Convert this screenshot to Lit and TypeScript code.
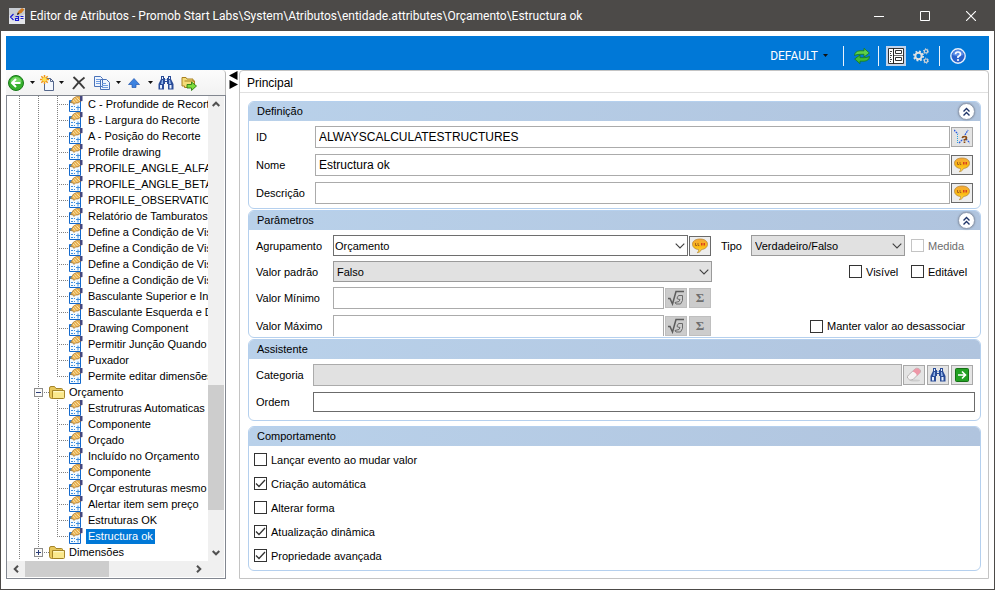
import { LitElement, html, css, nothing } from "lit";
import { customElement, state } from "lit/decorators.js";
import { classMap } from "lit/directives/class-map.js";

const binoculars = html`<svg width="16" height="16" viewBox="0 0 16 16">
  <path d="M3 1h3v2h1v3h2V3h1V1h3v3l2.500 5v5.500h-5.500V9H9V7H7v2H6v5.500H.5V9L3 4z" fill="#2a4c98"/>
  <path d="M4 2h1v2H4zM11 2h1v2h-1zM2 10h2v3.500H2zM11.500 10h2v3.500h-2z" fill="#eaf2ff"/>
  <path d="M4 5h1v4H3zM11 5h1l1 4h-2zM7 4h2v1H7z" fill="#8fb2e8"/>
</svg>`;

const balloon = html`<svg width="16" height="16" viewBox="0 0 16 16">
  <defs><linearGradient id="b" x2="0" y2="1"><stop offset="0" stop-color="#f4a83a"/><stop offset=".55" stop-color="#fbb910"/><stop offset="1" stop-color="#ffe04a"/></linearGradient></defs>
  <path d="M8 1c4.600 0 7.500 2.100 7.500 5.200 0 2.900-2.300 4.900-6 5.300C8.700 13.500 7 14.600 5.300 14.700c1-.9 1.400-1.900 1.200-3.200C2.900 11.100.5 9.100.5 6.200.5 3.100 3.400 1 8 1z" fill="url(#b)" stroke="#b98a3c" stroke-width=".8"/>
  <path d="M3.500 5v2.500H5M6 5v2.500h1.300" fill="none" stroke="#a8641c"/>
  <path d="M9 5h1.500v2.500H9zM11.500 5H13v2.500h-1.500z" fill="#d8401c"/>
</svg>`;

const attributeIcon = html`<svg class="leaf-ico" width="16" height="16" viewBox="0 0 16 16">
  <path d="M.5 4.500h11v11H.5z" fill="#f4faff" stroke="#1268cc"/>
  <path d="M1 4h6v3H1z" fill="#2f86e0"/>
  <path d="M2 10h2v1H2zM2 13h2v1H2zM5 10h1v1H5zM5 13h1v1H5zM7 11h4v1H7zM8.500 9.500h1v5h-1z" fill="#3f8fe0"/>
  <path d="M1.500 6.500L4.500 2 7.500.500H12v4.500L9 7H6.500L5 8.500 4 7z" fill="#e8b050" stroke="#9a6a24" stroke-width=".6"/>
  <path d="M4 4l2 2.500M5.500 2.500L8.500 6M7.500 1.500L11 5" stroke="#fbe6b4" stroke-width=".9"/>
  <path d="M11 0h2.500v5L11 5.500z" fill="#44477e"/>
</svg>`;

const folderIcon = html`<svg class="ico" width="16" height="16" viewBox="0 0 16 16">
  <path d="M.5 4Q.5 2.500 2 2.500h3.500L7 4.500h5.500q1 0 1 1V14.500H2.500Q.5 14 .5 12.500z" fill="#e8c85c" stroke="#9c7a1c" stroke-width=".9"/>
  <path d="M3.500 6.500h12v7q0 1-1 1H4.500q-1 0-1-1z" fill="#fae88c" stroke="#9c7a1c" stroke-width=".9"/>
  <path d="M4.500 7.700h10" stroke="#fffbd6"/>
</svg>`;

const chevron = html`<svg class="chev" width="10" height="6" viewBox="0 0 10 6"><path d="M.7.7L5 5 9.300.7" fill="none" stroke="#404040" stroke-width="1.100"/></svg>`;

const root = html`<svg width="18" height="16" viewBox="0 0 18 16"><path d="M1 8.500h2l2.500 5.500L9 1.500h8" fill="none" stroke="#5c5c5c" stroke-width="1.500"/><path d="M10 8l1.500-2.500h4v5l-2 3.500H9l-1-1.500 4-1 1-2-2.500-.5z" fill="none" stroke="#6a6a6a"/></svg>`;

const DIMENSIONS = [
  "C - Profundide de Recorte", "B - Largura do Recorte", "A - Posição do Recorte", "Profile drawing",
  "PROFILE_ANGLE_ALFA", "PROFILE_ANGLE_BETA", "PROFILE_OBSERVATION", "Relatório de Tamburatos",
  "Define a Condição de Visibilidade", "Define a Condição de Visibilidade", "Define a Condição de Visibilidade",
  "Define a Condição de Visibilidade", "Basculante Superior e Inferior", "Basculante Esquerda e Direita",
  "Drawing Component", "Permitir Junção Quando", "Puxador", "Permite editar dimensões",
];
const BUDGET = [
  "Estrutruras Automaticas", "Componente", "Orçado", "Incluído no Orçamento", "Componente",
  "Orçar estruturas mesmo", "Alertar item sem preço", "Estruturas OK", "Estructura ok",
];

const base = css`
  :host, * { box-sizing: border-box; }
  button { font: inherit; color: inherit; border: 0; background: none; padding: 0; margin: 0;
    display: inline-flex; align-items: center; justify-content: center; flex: none; }
  svg { display: block; flex: none; }
`;

@customElement("attribute-tree")
class AttributeTree extends LitElement {
  @state() selected = 8;

  static styles = [base, css`
    :host { display: grid; grid-template-columns: minmax(0, 1fr) 16px; grid-template-rows: minmax(0, 1fr) 16px;
      border: 1px solid #828790; background: #fff; min-height: 0; padding: 0 1px 1px 0; }
    .rows { list-style: none; margin: 0; padding: 0; overflow: hidden; }
    .row { display: flex; height: 16px; align-items: center; padding-left: 12px; white-space: nowrap; }
    .guide { height: 16px; flex: none; background: repeating-linear-gradient(#808080 0 1px, transparent 1px 2px) left top / 1px 100% no-repeat; }
    .wide { width: 19px; }
    .mid { width: 15px; }
    .branch { width: 12px; background:
      repeating-linear-gradient(#808080 0 1px, transparent 1px 2px) left top / 1px 100% no-repeat,
      repeating-linear-gradient(90deg, #808080 0 1px, transparent 1px 2px) left 8px / 100% 1px no-repeat; }
    .branch.last { background-size: 1px 9px, 100% 1px; }
    .knot { width: 15px; display: flex; align-items: center; background:
      repeating-linear-gradient(#808080 0 1px, transparent 1px 2px) 4px top / 1px 100% no-repeat,
      repeating-linear-gradient(90deg, #808080 0 1px, transparent 1px 2px) left 8px / 100% 1px no-repeat; }
    .toggle { width: 9px; height: 9px; border: 1px solid #8c8c8c; background: #fafafa; }
    .ico { margin-right: 2px; }
    .leaf-ico { margin-right: 1px; }
    .label { padding: 0 2px; line-height: 15px; }
    .picked { background: #0078d7; color: #fff; }
    .vbar, .hbar { background: #f0f0f0; display: flex; }
    .vbar { flex-direction: column; }
    .bar-btn { width: 16px; height: 16px; }
    .hbar .bar-btn { width: 18px; }
    .track { flex: 1; display: flex; }
    .vbar .track { flex-direction: column; }
    .vbar .thumb { margin-top: auto; height: 29%; background: #cdcdcd; }
    .vbar .after { height: 8%; }
    .hbar .thumb { width: 51%; background: #cdcdcd; }
    .corner { background: #f0f0f0; }
  `];

  private leaf(text: string, index: number, last: boolean) {
    const picked = index === this.selected;
    return html`<li class="row"><span class="guide wide"></span><span class="guide wide"></span>
      <span class=${classMap({ guide: true, branch: true, last })}></span>${attributeIcon}
      <span class=${classMap({ label: true, picked })} @click=${() => { if (index >= 0) this.selected = index; }}>${text}</span></li>`;
  }

  private folder(text: string, open: boolean) {
    return html`<li class="row"><span class="guide mid"></span><span class="guide knot">
      <button class="toggle" aria-label=${open ? "Recolher" : "Expandir"}><svg width="7" height="7" viewBox="0 0 7 7">
        <path d=${open ? "M1 3.500h5" : "M1 3.500h5M3.500 1v5"} stroke="#2c3e78"/></svg></button></span>${folderIcon}
      <span class="label">${text}</span></li>`;
  }

  private arrow(d: string, name: string) {
    return html`<button class="bar-btn" aria-label=${name}><svg width="8" height="8" viewBox="0 0 8 8"><path d=${d} fill="none" stroke="#505050" stroke-width="2"/></svg></button>`;
  }

  render() {
    return html`
      <ul class="rows">
        ${DIMENSIONS.map((t, i) => this.leaf(t, -1, i === DIMENSIONS.length - 1))}
        ${this.folder("Orçamento", true)}
        ${BUDGET.map((t, i) => this.leaf(t, i, i === BUDGET.length - 1))}
        ${this.folder("Dimensões", false)}
      </ul>
      <div class="vbar">${this.arrow("M.7 6L4 2.700 7.300 6", "Acima")}<div class="track"><div class="thumb"></div><div class="after"></div></div>${this.arrow("M.7 2L4 5.300 7.300 2", "Abaixo")}</div>
      <div class="hbar">${this.arrow("M6 .7L2.700 4 6 7.300", "Esquerda")}<div class="track"><div class="thumb"></div></div>${this.arrow("M2 .7L5.300 4 2 7.300", "Direita")}</div>
      <div class="corner"></div>`;
  }
}

@customElement("group-box")
class GroupBox extends LitElement {
  static properties = { heading: {}, collapsible: { type: Boolean } };
  declare heading: string;
  declare collapsible: boolean;

  static styles = [base, css`
    :host { display: block; border: 1px solid #b5d0ee; border-radius: 6px; overflow: hidden; background: #fff; }
    .head { height: 19px; display: flex; align-items: center; justify-content: space-between;
      padding: 0 5px 0 8px; background: linear-gradient(90deg, #b9d1ea, #b0c4de); }
    h2 { margin: 0; padding-bottom: 2px; font: inherit; }
    .fold { width: 17px; height: 17px; border-radius: 50%; background: #fff; border: 1px solid #8e9bb0;
      box-shadow: 0 0 2px #7b8798; }
  `];

  render() {
    return html`<div class="head"><h2>${this.heading}</h2>
      ${this.collapsible ? html`<button class="fold" aria-label="Recolher ${this.heading}"><svg width="9" height="10" viewBox="0 0 9 10">
        <path d="M1.500 4.500l3-3 3 3M1.500 8.500l3-3 3 3" fill="none" stroke="#1f3468" stroke-width="1.400"/></svg></button>` : nothing}</div>
      <slot></slot>`;
  }
}

@customElement("app-root")
class AppRoot extends LitElement {
  static styles = [base, css`
    :host { display: block; height: 100vh; padding: 0 13px 17px 0; background: #fff; color: #000;
      font: 11px/14px "Liberation Sans", Arial, sans-serif; }
    .window { height: 100%; display: flex; flex-direction: column; border: 1px solid #4c4a48; border-top: 0; }
    .title { height: 31px; flex: none; background: #4c4a48; color: #fff; display: flex; align-items: center; padding-left: 8px;
      font: 12px/16px Roboto, sans-serif; }
    .title h1 { font: inherit; margin: 0 auto 0 5px; white-space: nowrap; }
    .winbtn { width: 46px; height: 31px; }
    .client { flex: 1; min-height: 0; padding: 5px 5px 10px; display: flex; flex-direction: column; }
    .ribbon { height: 34px; flex: none; background: #0078d7; color: #fff; display: flex; align-items: center;
      justify-content: flex-end; padding: 5px 21px 0 0; }
    .profile { font: 12px/16px Roboto, sans-serif; gap: 5px; margin-right: 7px; }
    .tool { width: 20px; height: 20px; }
    .on { background: #c2d3ea; margin-right: 5px; }
    .sep { width: 1px; height: 20px; background: #e8f2fc; margin: 0 8px; }
    .tight { margin: 0 7px 0 6px; }
    .main { flex: 1; min-height: 0; display: grid; grid-template-columns: 220px 13px minmax(0, 1fr); }
    .side { display: flex; flex-direction: column; min-height: 0; }
    attribute-tree { flex: 1; }
    .bar { height: 25px; flex: none; display: flex; align-items: center; padding-left: 1px;
      background: linear-gradient(#fcfcfc, #f2f2f2); border-right: 1px solid #b8b8b8; border-radius: 0 4px 0 0; }
    .item { width: 18px; height: 20px; }
    .caret { width: 14px; height: 20px; }
    .narrow { width: 8px; }
    .gap { margin-left: 5px; }
    .split { padding: 1px 0 0 2px; display: flex; flex-direction: column; }
    .panel { border: 1px solid #c4c4c4; border-radius: 4px 4px 0 0; min-width: 0; }
    .tab { height: 22px; border-bottom: 1px solid #e0e0e0; padding: 5px 7px; font-size: 12px; margin: 0; font-weight: normal; }
    .groups { padding: 8px 7px 0 8px; display: flex; flex-direction: column; gap: 1px; }
    .apart { margin-top: 4px; }
    .body { padding: 5px 7px 4px; display: grid; gap: 6px; }
    .body.roomy { padding-bottom: 8px; }
    .line { display: grid; align-items: center; column-gap: 1px; }
    .def { grid-template-columns: 58px minmax(0, 1fr) 22px; }
    .asst { grid-template-columns: 56px minmax(0, 1fr) auto; }
    .order { grid-template-columns: 56px minmax(0, 1fr); margin-right: -2px; }
    .params { height: 106px; margin-bottom: 1px; overflow: hidden; align-content: start; padding-bottom: 0; row-gap: 5px; }
    .par { grid-template-columns: 76px minmax(0, 1fr) 260px; }
    .gapped { margin-bottom: 1px; }
    .left { display: flex; align-items: center; gap: 1px; padding-right: 1px; }
    .full { padding-right: 0; }
    .right { display: flex; align-items: center; justify-content: flex-end; }
    .pair { display: flex; gap: 2px; }
    input[type="text"] { width: 100%; min-width: 0; height: 22px; border: 1px solid #ababab; padding: 0 3px; margin: 0; background: #fff;
      font: 12px/16px "Liberation Sans", Arial, sans-serif; border-radius: 0; outline: 0; color: #000; }
    input.off { background: #e1e1e1; border-color: #ababab; }
    input.dark { height: 20px; border-color: #6b6b6b; }
    .combo { position: relative; display: block; flex: 1; min-width: 0; }
    .combo.type { flex: 0 0 154px; margin-right: 6px; }
    .chev { position: absolute; right: 3px; top: 8px; pointer-events: none; }
    select { appearance: none; width: 100%; height: 21px; border: 1px solid #9a9a9a; border-radius: 0; background: #e1e1e1;
      padding: 0 16px 0 3px; margin: 0; font: inherit; color: #000; display: block; outline: 0; }
    select.edit { background: #fff; border-color: #6e6e6e; padding-left: 1px; }
    .sq { width: 22px; height: 20px; border: 1px solid #a8a8a8; background: #e4e4e4; }
    .talk { border-color: #6a6a6a; background: #ededed; }
    .dim { background: #cccccc; border-color: #bfbfbf; color: #6e6e6e; }
    .sum { font: bold 13px/16px "Liberation Serif", serif; }
    .type-label { width: 30px; }
    .check { display: flex; align-items: center; gap: 4px; white-space: nowrap; }
    .col { width: 62px; }
    .keep { width: 163px; }
    .muted { color: #6d6d6d; }
    input[type="checkbox"] { appearance: none; width: 13px; height: 13px; margin: 0; border: 1px solid #333; background: #fff; flex: none; }
    input[type="checkbox"]:checked { background: #fff url("data:image/svg+xml,%3Csvg xmlns='http://www.w3.org/2000/svg' viewBox='0 0 11 11'%3E%3Cpath d='M1 5.500l3 3 6-6.500' fill='none' stroke='%23333' stroke-width='1.300'/%3E%3C/svg%3E") center / 11px 11px no-repeat; }
    input[type="checkbox"]:disabled { border-color: #c4c4c4; }
    .behave { padding: 7px 5px 8px; gap: 11px; }
    .behave .check { height: 13px; }
  `];

  private caret(cls = "") {
    return html`<button class="caret ${cls}" aria-label="Opções"><svg width="5" height="3" viewBox="0 0 5 3"><path d="M0 0h5L2.500 3z" fill="#111"/></svg></button>`;
  }

  private check(id: string, text: string, checked = false, cls = "", disabled = false) {
    return html`<label class="check ${cls}" for=${id}><input type="checkbox" id=${id} ?checked=${checked} ?disabled=${disabled}>${text}</label>`;
  }

  private limit(id: string, text: string) {
    return html`<label for=${id}>${text}</label><div class="left"><input type="text" id=${id}>
      <span class="pair"><button class="sq dim" disabled aria-label="Fórmula">${root}</button><button class="sq dim sum" disabled>Σ</button></span></div>`;
  }

  render() {
    return html`<div class="window">
      <header class="title">
        <svg width="16" height="16" viewBox="0 0 16 16"><path d="M0 0h16v16H0z" fill="#e4e6ea"/><path d="M0 0h16v6L6 11 0 7z" fill="#c8ccd2"/>
          <path d="M4.500 6L1.500 9l3 3M6.500 8.500h3v4h-3v-2h3M11.500 8.500h3M11.500 10.500h3" fill="none" stroke="#1818d0" stroke-width="1.200"/>
          <path d="M8 6.500L9.500 3 13 0l2.500 1.500-3 3.500z" fill="#d07a20"/><path d="M8 7l.8-2.500L10.500 6z" fill="#111"/></svg>
        <h1>Editor de Atributos - Promob Start Labs\\System\\Atributos\\entidade.attributes\\Orçamento\\Estructura ok</h1>
        <button class="winbtn" aria-label="Minimizar"><svg width="10" height="10" viewBox="0 0 10 10"><path d="M0 5.500h10" stroke="#fff"/></svg></button>
        <button class="winbtn" aria-label="Maximizar"><svg width="10" height="10" viewBox="0 0 10 10"><path d="M.5.5h9v9h-9z" fill="none" stroke="#fff"/></svg></button>
        <button class="winbtn" aria-label="Fechar"><svg width="10" height="10" viewBox="0 0 10 10"><path d="M0 0l10 10M10 0L0 10" stroke="#fff" stroke-width="1.100"/></svg></button>
      </header>
      <div class="client">
        <nav class="ribbon">
          <button class="profile">DEFAULT<svg width="5" height="3" viewBox="0 0 5 3"><path d="M0 0h5L2.500 3z" fill="#111"/></svg></button>
          <span class="sep"></span>
          <button class="tool" aria-label="Atualizar"><svg width="16" height="16" viewBox="0 0 16 16">
            <path d="M.5 7.500Q1 3 6 2.800h4V.3L15.300 5 10 9V6.300H6Q3 6.300.5 7.500z" fill="#5ed048" stroke="#167a1a" stroke-width=".8"/>
            <path d="M15.500 8.500Q15 13 10 13.200H6v2.500L.7 11 6 7v2.700h4q3 0 5.500-1.200z" fill="#42bc34" stroke="#167a1a" stroke-width=".8"/>
            </svg></button>
          <span class="sep tight"></span>
          <button class="tool on" aria-label="Propriedades"><svg width="16" height="16" viewBox="0 0 16 16">
            <path d="M.5.5h15v15H.5z" fill="#fff" stroke="#333"/><path d="M5.500 0v16" stroke="#222"/>
            <path d="M2 3.500h2M2 5.500h1M2 7.500h2M2 9.500h1M2 11.500h2M2 13.500h1" stroke="#444"/><path d="M7.500 2.500h6v3h-6zM7.500 9.500h6v3h-6z" fill="#fff" stroke="#333"/><path d="M6 7.500h9" fill="none" stroke="#777"/></svg></button>
          <button class="tool" aria-label="Configurações"><svg width="16" height="16" viewBox="0 0 16 16" fill="none">
            <circle cx="5.500" cy="8" r="3.200" stroke="#e2e2e2" stroke-width="2"/><circle cx="5.500" cy="8" r="4.600" stroke="#e2e2e2" stroke-width="1.800" stroke-dasharray="1.800 1.810"/>
            <circle cx="13" cy="3.300" r="1.700" stroke="#d6d6d6" stroke-width="1.200"/><circle cx="13" cy="3.300" r="2.600" stroke="#d6d6d6" stroke-dasharray="1.200 1.520"/>
            <circle cx="13" cy="12.700" r="1.700" stroke="#d6d6d6" stroke-width="1.200"/><circle cx="13" cy="12.700" r="2.600" stroke="#d6d6d6" stroke-dasharray="1.200 1.520"/></svg></button>
          <span class="sep"></span>
          <button class="tool" aria-label="Ajuda"><svg width="16" height="16" viewBox="0 0 16 16"><circle cx="8" cy="8" r="7.200" fill="#2a62cc" stroke="#e8f0fc" stroke-width="1.400"/>
            <path d="M2.500 7a5.500 5 0 0 1 11 0q-5 2-11 0z" fill="#5a8ce8"/><path d="M5.500 6.200Q5.600 4 8 4t2.500 2.200Q10.500 7.500 8 8.800V10" fill="none" stroke="#fff" stroke-width="1.700"/><circle cx="8" cy="12" r="1.100" fill="#fff"/></svg></button>
        </nav>
        <div class="main">
          <aside class="side">
            <div class="bar">
              <button class="item" aria-label="Voltar"><svg width="16" height="16" viewBox="0 0 16 16"><circle cx="8" cy="8" r="7.500" fill="#35b02c" stroke="#187818"/>
                <path d="M2.500 7a5.500 5 0 0 1 11 0q-5 2-11 0z" fill="#74d864"/><path d="M12.500 8H4.500M8 4L4 8l4 4" fill="none" stroke="#fff" stroke-width="2"/></svg></button>
              ${this.caret()}
              <button class="item" aria-label="Novo"><svg width="16" height="16" viewBox="0 0 16 16"><path d="M4.500 3.500h6l3 3v9h-9z" fill="#f4f8ff" stroke="#55678c"/><path d="M10.500 3.500v3h3" fill="none" stroke="#55678c"/>
                <path d="M4.500 0v9M0 4.500h9M1.300 1.300l6.400 6.400M7.700 1.300L1.300 7.700" stroke="#f0981c" stroke-width="1.500"/><circle cx="4.500" cy="4.500" r="2.200" fill="#ffe050"/></svg></button>
              ${this.caret("narrow")}
              <button class="item gap" aria-label="Excluir"><svg width="14" height="14" viewBox="0 0 14 14"><path d="M1.500 1Q6 5 12.500 12.500M12.500 1.500Q6 6 1 13" fill="none" stroke="#3c3c3c" stroke-width="1.900"/></svg></button>
              <button class="item gap" aria-label="Copiar"><svg width="16" height="16" viewBox="0 0 16 16"><g fill="#f0f6ff" stroke="#4a72b8"><path d="M.5 1.500h6l2 2v8h-8zM6.500 4.500h6l3 3v7h-9z"/></g><path d="M2 4.500h4M2 6.500h4M2 8.500h4M8 8.500h4M8 10.500h6M8 12.500h6" stroke="#6f9ce0"/></svg></button>
              ${this.caret()}
              <button class="item" aria-label="Mover"><svg width="12" height="10" viewBox="0 0 12 10"><path d="M6 .5L11.500 6.500H8v3H4v-3H.5z" fill="#3c82e0" stroke="#2258b0" stroke-width=".7"/></svg></button>
              ${this.caret()}
              <button class="item" aria-label="Localizar">${binoculars}</button>
              <button class="item gap" aria-label="Ir para pasta"><svg width="16" height="16" viewBox="0 0 16 16"><path d="M1 2.500h4l1 1.500h6v2h1.500v6.500h-10V11H1z" fill="#f4dc78" stroke="#a88020"/><path d="M3.500 6h10" stroke="#a88020"/>
                <path d="M6 9.500h4.500V7L15.500 11l-5 4.500V13H6z" fill="#7cdc3c" stroke="#2c7c14" stroke-width=".9"/></svg></button>
            </div>
            <attribute-tree></attribute-tree>
          </aside>
          <div class="split">
            <button aria-label="Recolher painel"><svg width="9" height="9" viewBox="0 0 9 9"><path d="M8.500 0v9L0 4.500z" fill="#000"/></svg></button>
            <button aria-label="Expandir painel"><svg width="9" height="9" viewBox="0 0 9 9"><path d="M.5 0v9L9 4.500z" fill="#000"/></svg></button>
          </div>
          <main class="panel">
            <h2 class="tab">Principal</h2>
            <div class="groups">
              <group-box heading="Definição" collapsible><div class="body">
                <div class="line def"><label for="id">ID</label><input type="text" id="id" .value=${"ALWAYSCALCULATESTRUCTURES"}>
                  <button class="sq" aria-label="Validar ID"><svg width="16" height="16" viewBox="0 0 16 16"><path d="M0 1l4 4M11 6l3-5M5 14l4-4M12 10l4 4" fill="none" stroke="#2a5be0" stroke-width="1.300" stroke-dasharray="1.800 .8"/><path d="M3.500 5v9" stroke="#28a0e0" stroke-dasharray="1 1"/>
                    <path d="M8.500 9Q8.500 7.500 10.500 7.500t2 1.500Q12.500 10.500 10.500 10.800v.9M10.500 12.500V14" fill="none" stroke="#8a4a14" stroke-width="1.700"/></svg></button></div>
                <div class="line def"><label for="nome">Nome</label><input type="text" id="nome" .value=${"Estructura ok"}><button class="sq talk" aria-label="Traduzir nome">${balloon}</button></div>
                <div class="line def"><label for="desc">Descrição</label><input type="text" id="desc"><button class="sq talk" aria-label="Traduzir descrição">${balloon}</button></div>
              </div></group-box>
              <group-box heading="Parâmetros" collapsible><div class="body params">
                <div class="line par"><label for="agr">Agrupamento</label>
                  <div class="left"><span class="combo"><select class="edit" id="agr"><option>Orçamento</option></select>${chevron}</span><button class="sq talk" aria-label="Traduzir agrupamento">${balloon}</button></div>
                  <div class="right"><label class="type-label" for="tipo">Tipo</label><span class="combo type"><select id="tipo"><option>Verdadeiro/Falso</option></select>${chevron}</span>${this.check("medida", "Medida", false, "col muted", true)}</div></div>
                <div class="line par"><label for="padrao">Valor padrão</label>
                  <div class="left full"><span class="combo"><select id="padrao"><option>Falso</option></select>${chevron}</span></div>
                  <div class="right">${this.check("visivel", "Visível", false, "col")}${this.check("editavel", "Editável", false, "col")}</div></div>
                <div class="line par gapped">${this.limit("min", "Valor Mínimo")}</div>
                <div class="line par">${this.limit("max", "Valor Máximo")}<div class="right">${this.check("manter", "Manter valor ao desassociar", false, "keep")}</div></div>
              </div></group-box>
              <group-box heading="Assistente"><div class="body roomy">
                <div class="line asst"><label for="cat">Categoria</label><input class="off" type="text" id="cat" readonly>
                  <span class="pair">
                    <button class="sq" aria-label="Limpar"><svg width="16" height="16" viewBox="0 0 16 16"><ellipse cx="9" cy="13.500" rx="5" ry="1" fill="#ccc"/><path d="M1.500 11Q1 9.500 2.500 8L9 2q1.500-1.300 3.500-.5 2.500 1 2 3.500L7 12.500q-3.500 2-5.500-1.500z" fill="#f6f4f4" stroke="#a8a4a4" stroke-width=".8"/>
                      <path d="M6.500 4.500L9 2q2-1.300 4 0 2 1.500 1.300 3.500L11 9Q10.500 5.500 6.500 4.500z" fill="#ee98a8"/></svg></button>
                    <button class="sq" aria-label="Localizar categoria">${binoculars}</button>
                    <button class="sq" aria-label="Ir para categoria"><svg width="14" height="14" viewBox="0 0 14 14"><rect x=".5" y=".5" width="13" height="13" rx="1" fill="#22a022" stroke="#147014"/><path d="M3 7h7.500M7 3.500L10.500 7 7 10.500" fill="none" stroke="#fff" stroke-width="1.600"/></svg></button>
                  </span></div>
                <div class="line order"><label for="ordem">Ordem</label><input class="dark" type="text" id="ordem"></div>
              </div></group-box>
              <group-box class="apart" heading="Comportamento"><div class="body behave">
                ${this.check("b1", "Lançar evento ao mudar valor")}
                ${this.check("b2", "Criação automática", true)}
                ${this.check("b3", "Alterar forma")}
                ${this.check("b4", "Atualização dinâmica", true)}
                ${this.check("b5", "Propriedade avançada", true)}
              </div></group-box>
            </div>
          </main>
        </div>
      </div>
    </div>`;
  }
}
